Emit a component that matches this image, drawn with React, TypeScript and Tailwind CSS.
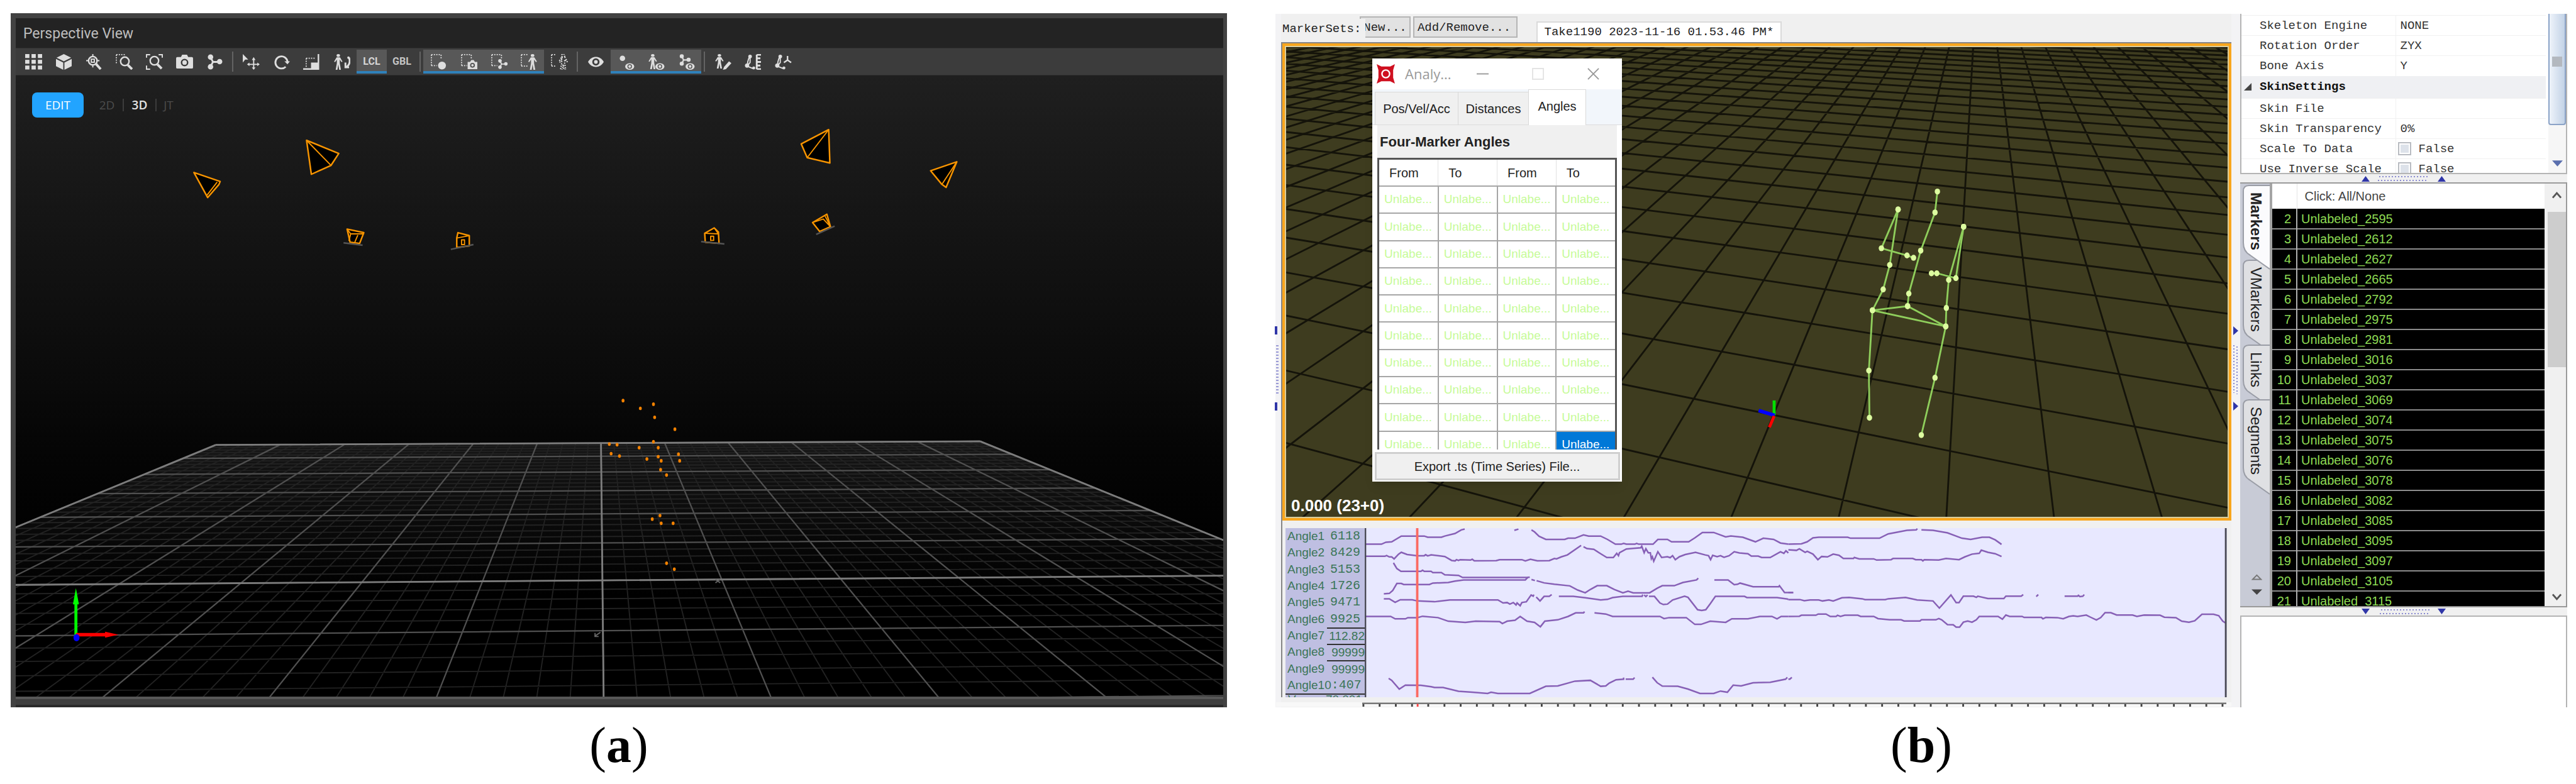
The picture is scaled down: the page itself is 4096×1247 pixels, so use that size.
import type { ReactNode } from "react";

type Point = [number, number];

const line = (points: Point[]) => "M" + points.map(([x, y]) => `${x.toFixed(1)},${y.toFixed(1)}`).join(" ");

const range = (from: number, to: number) => Array.from({ length: to - from + 1 }, (_, i) => from + i);

/* ---------- left view: floor, cameras, markers ---------- */

// floor coordinates: u runs left to right (-6..6), v from the back edge to the viewer
function floor(u: number, v: number): Point {
  const w = 1 + 0.001352 * u - 0.07793 * v;
  return [(108.22 * u - 78.34 * v + 1008) / w, (0.5 * u - 37.47 * v + 743.3) / w];
}

const floorMinor = [
  ...range(-30, 30).filter((i) => i % 5).map((i) => line([floor(i / 5, 0), floor(i / 5, 9)])),
  ...range(0, 45).filter((i) => i % 5).map((i) => line([floor(-6, i / 5), floor(6, i / 5)])),
].join("");

const floorMajor = [
  ...range(-6, 6).map((i) => line([floor(i, 0), floor(i, 9)])),
  ...range(0, 8).map((i) => line([floor(-6, i), floor(6, i)])),
].join("");

const floorBright = [
  line([floor(-6, 0), floor(6, 0)]),
  line([floor(-6, 6), floor(6, 6)]),
  line([floor(0, 0), floor(0, 9)]),
  line([floor(-6, 0), floor(-6, 9)]),
  line([floor(6, 0), floor(6, 9)]),
].join("");

const cameras = [
  { body: "M325,289 369,304 367,309 348,331Z", edge: "M364,305 347,327" },
  { body: "M514,235 568,257 555,277 522,292Z", edge: "M514,235 555,277" },
  { body: "M582,384 610,390 603,408 587,406Z", edge: "M582,384 588,392 610,392M588,392 585,404M600,394 595,406", base: "M576,407 608,411" },
  { body: "M768,390 787,395 787,412 766,415 766,399Z", edge: "M766,399 787,395M774,402h5v8h-5z", base: "M756,418 794,410" },
  { body: "M1198,382 1182,391 1183,406 1206,408 1205,389Z", edge: "M1182,391 1205,392M1198,382 1205,392M1192,396h5v7h-5z", base: "M1176,405 1215,409" },
  { body: "M1387,359 1363,373 1375,388 1393,380Z", edge: "M1363,373 1381,367 1393,380M1384,362 1392,378", base: "M1369,393 1400,379" },
  { body: "M1390,217 1344,241 1354,264 1392,273Z", edge: "M1390,217 1354,264" },
  { body: "M1605,271 1561,286 1580,309 1587,314Z", edge: "M1605,271 1580,309" },
];

const dots: Point[] = [
  [1045, 672], [1074, 685], [1096, 678], [1098, 700], [1132, 720], [1096, 741], [1022, 745],
  [1035, 746], [1072, 751], [1104, 751], [1025, 761], [1039, 765], [1085, 770], [1104, 766],
  [1109, 773], [1138, 762], [1140, 773], [1108, 788], [1118, 797], [1107, 865], [1094, 871],
  [1109, 878], [1129, 878], [1118, 945], [1131, 955],
];

function PerspectiveScene() {
  return (
    <svg viewBox="26 126 2026 1043" preserveAspectRatio="none" className="absolute inset-0 h-full w-full" aria-hidden="true">
      <defs>
        <linearGradient id="haze" x1="0" y1="0" x2="0" y2="1">
          <stop offset="0" stopColor="#161616" />
          <stop offset="0.4" stopColor="#000" />
        </linearGradient>
      </defs>
      <path d={line([floor(-6, 0), floor(6, 0), floor(6, 9), floor(-6, 9)]) + "Z"} fill="url(#haze)" />
      <path d={floorMinor} fill="none" stroke="#222" strokeWidth="2" />
      <path d={floorMajor} fill="none" stroke="#505050" strokeWidth="2.4" />
      <path d={floorBright} fill="none" stroke="#7c7c7c" strokeWidth="3" />
      {cameras.map((camera) => (
        <g key={camera.body} fill="none" stroke="#f79400" strokeWidth="2.6" strokeLinejoin="round">
          <path d={camera.body} fill="#000" />
          <path d={camera.edge} strokeWidth="2" />
          {camera.base && <path d={camera.base} stroke="#555" />}
        </g>
      ))}
      {dots.map(([x, y]) => (
        <ellipse key={`${x}-${y}`} cx={x} cy={y} rx="2.4" ry="3" fill="#f58200" />
      ))}
      <g stroke="#666" strokeWidth="2" fill="none">
        <path d="M1007,1061 997,1068M998,1062v6h6" />
        <path d="M1200,972 1208,978M1208,972 1200,978" />
      </g>
      <path d="M127,1066V1010" stroke="#0f0" strokeWidth="5" />
      <path d="M127,987 122,1014H132Z" fill="#0f0" />
      <path d="M127,1065H178" stroke="#f00" strokeWidth="6" />
      <path d="M198,1065 176,1060V1070Z" fill="#f00" />
      <ellipse cx="128" cy="1070" rx="5" ry="6" fill="#00f" />
    </svg>
  );
}

/* ---------- toolbar icons ---------- */

const person = "M6 0a2.4 2.4 0 1 1 0 4.8A2.4 2.4 0 1 1 6 0M3.6 5.4h4.8l3.4 7-1.4.8-2.4-4.2v6L9.6 26H7.2L6 17 4.8 26H2.4L4 15V9L1.6 13.2.2 12.4Z";
const selection = "M2 1h16M2 19h9M2 1v18M18 1v6";

function Icon({ children }: { children: ReactNode }) {
  return (
    <svg viewBox="0 0 28 26" className="h-[25px] w-[27px]" fill="#dedede" stroke="none" aria-hidden="true">
      {children}
    </svg>
  );
}

const dashed = { fill: "none", stroke: "#dedede", strokeWidth: 1.8, strokeDasharray: "2 2" };
const stroked = { fill: "none", stroke: "#dedede", strokeWidth: 2 };

function SmallEye() {
  return (
    <g>
      <ellipse cx="20" cy="20.5" rx="7.5" ry="5.5" />
      <circle cx="20" cy="20.5" r="3" fill="none" stroke="#555" strokeWidth="1.5" />
    </g>
  );
}

function Molecule() {
  return (
    <g>
      <circle cx="7" cy="5" r="4.5" />
      <circle cx="7" cy="21" r="4.5" />
      <circle cx="22" cy="12.5" r="4.5" />
      <path d="M7 5 11 13 7 21M11 13H22" fill="none" stroke="#dedede" strokeWidth="3" />
    </g>
  );
}

const icons: Record<string, ReactNode> = {
  Grid: range(0, 8).map((i) => <rect key={i} x={(i % 3) * 10.5} y={Math.floor(i / 3) * 9.5} width="7" height="6.5" />),
  "Reset view": <path d="M14 0 26 6 14 12 2 6ZM1 8 13 14V26L1 20ZM27 8 15 14V26L27 20Z" />,
  "Zoom to selection": (
    <>
      <circle cx="12" cy="11" r="7" {...stroked} strokeWidth="2.5" />
      <path d="M12 0v5M12 17v5M1 11h5M18 11h5" {...stroked} />
      <rect x="9.5" y="8.5" width="5" height="5" {...stroked} />
      <path d="M17 16 25 25" {...stroked} strokeWidth="4" />
    </>
  ),
  "Zoom region": (
    <>
      <path d="M1 1h14M1 1v14" {...dashed} />
      <circle cx="15" cy="12" r="7" {...stroked} strokeWidth="2.5" />
      <path d="M20 18 27 25" {...stroked} strokeWidth="4" />
    </>
  ),
  "Zoom extents": (
    <>
      <path d="M1 6V1h6M21 1h6v5M1 19v6h6" {...stroked} />
      <circle cx="14" cy="11" r="7" {...stroked} strokeWidth="2.5" />
      <path d="M19 17 26 24" {...stroked} strokeWidth="4" />
    </>
  ),
  Camera: (
    <>
      <path d="M2 5h6l2-4h8l2 4h6a2 2 0 0 1 2 2v15a2 2 0 0 1-2 2H2a2 2 0 0 1-2-2V7a2 2 0 0 1 2-2Z" />
      <circle cx="14" cy="14" r="5" fill="none" stroke="#3c3c3c" strokeWidth="2.5" />
    </>
  ),
  Skeleton: <Molecule />,
  Translate: (
    <>
      <path d="M0 0 9 9 4 9 0 14Z" />
      <path d="M18 9v16M10 17h16" {...stroked} />
      <path d="M18 5 21 10H15ZM18 26 15 22H21ZM7 17 11 14V20ZM28 17 24 14V20Z" />
    </>
  ),
  Rotate: (
    <>
      <path d="M21 21A10 10 0 1 1 24 13" {...stroked} strokeWidth="3" />
      <path d="M19 12H28L24 17Z" />
    </>
  ),
  Scale: (
    <>
      <path d="M5 7h14M5 7v15" {...dashed} />
      <path d="M24 0h2.5v26H0v-2.5h13V14h11Z" />
    </>
  ),
  "Pose actor": (
    <>
      <path d={person} transform="translate(1 0) scale(1.2 1)" />
      <path d="M26 6c2 6 1 12-5 16M20 14v8h6" {...stroked} strokeWidth="3" />
      <circle cx="25" cy="6" r="2" />
    </>
  ),
  "Select markers": (
    <>
      <path d={selection} {...dashed} />
      <circle cx="19.5" cy="19" r="6.5" />
    </>
  ),
  "Select cameras": (
    <>
      <path d={selection} {...dashed} />
      <path d="M12 13h4l2-3h4l2 3h4v12H12Z" />
      <circle cx="20" cy="18.5" r="3" fill="none" stroke="#555" strokeWidth="2" />
    </>
  ),
  "Select rigid bodies": (
    <>
      <path d={selection} {...dashed} />
      <g transform="translate(11 8) scale(.65)">
        <Molecule />
      </g>
    </>
  ),
  "Select skeletons": (
    <>
      <path d="M1 1h12M1 20h10M1 1v18" {...dashed} />
      <path d={person} transform="translate(12 0) scale(1.25 1)" />
    </>
  ),
  "Select bones": (
    <>
      <path d="M1 1h8M1 20h8M1 1v18" {...dashed} />
      <path d={person} transform="translate(13 0) scale(1.2 1)" {...dashed} />
    </>
  ),
  Visibility: (
    <>
      <path d="M1 13C7 2 21 2 27 13 21 24 7 24 1 13Z" />
      <circle cx="14" cy="13" r="4.5" fill="none" stroke="#3c3c3c" strokeWidth="3" />
    </>
  ),
  "Show markers": (
    <>
      <circle cx="8" cy="7" r="4.5" />
      <SmallEye />
    </>
  ),
  "Show skeletons": (
    <>
      <path d={person} transform="translate(1 0) scale(1.2 .96)" />
      <SmallEye />
    </>
  ),
  "Show rigid bodies": (
    <>
      <g transform="translate(1 0) scale(.75)">
        <Molecule />
      </g>
      <SmallEye />
    </>
  ),
  "Edit skeleton": (
    <>
      <path d={person} transform="translate(1 0) scale(1.2 .92)" />
      <path d="M24 12 28 15 19 25 14 26 16 21Z" />
    </>
  ),
  "Label eyes": (
    <>
      <path d="M9 3C5 9 5 14 4 20L14 24M9 3 9 14 4 20" {...stroked} />
      <circle cx="9" cy="4" r="3" />
      <circle cx="4" cy="19" r="3.5" />
      <circle cx="15" cy="23" r="2.5" />
      <path d="M20 1h7M20 7h6M20 13h7M20 19h6M20 25h7M20 1v24" {...stroked} strokeWidth="3" />
    </>
  ),
  "Label axes": (
    <>
      <path d="M9 3C5 9 5 14 4 20L14 24M9 3 9 14 4 20" {...stroked} />
      <circle cx="9" cy="4" r="3" />
      <circle cx="4" cy="19" r="3.5" />
      <circle cx="15" cy="23" r="2.5" />
      <path d="M21 3v7M21 10 15 14M21 10 27 14" {...stroked} strokeWidth="2.5" />
    </>
  ),
};

const toolGroups: { name: string; active?: boolean }[][] = [
  [{ name: "Grid" }, { name: "Reset view" }, { name: "Zoom to selection" }, { name: "Zoom region" }, { name: "Zoom extents" }, { name: "Camera" }, { name: "Skeleton" }],
  [{ name: "Translate" }, { name: "Rotate" }, { name: "Scale" }, { name: "Pose actor" }, { name: "LCL", active: true }, { name: "GBL" }],
  [
    { name: "Select markers", active: true },
    { name: "Select cameras", active: true },
    { name: "Select rigid bodies", active: true },
    { name: "Select skeletons", active: true },
    { name: "Select bones" },
  ],
  [{ name: "Visibility" }, { name: "Show markers", active: true }, { name: "Show skeletons", active: true }, { name: "Show rigid bodies", active: true }],
  [{ name: "Edit skeleton" }, { name: "Label eyes" }, { name: "Label axes" }],
];

function Toolbar() {
  return (
    <div className="flex h-11 items-center border-y border-[#303030] bg-[#3c3c3c] pl-1 font-['Roboto',sans-serif]">
      {toolGroups.map((group, i) => (
        <div key={i} className="flex items-center">
          {i > 0 && <span className="mx-1 h-8 w-0.5 bg-[#636363]" />}
          {group.map((tool) => (
            <button
              key={tool.name}
              type="button"
              aria-label={tool.name}
              className={
                tool.active
                  ? "flex h-[38px] w-12 items-center justify-center border-b-4 border-[#2f81bb] bg-[#585858] pt-1 text-[16px] font-bold text-[#d6d6d6]"
                  : "flex h-[38px] w-12 items-center justify-center text-[16px] font-bold text-[#c4c4c4]"
              }
            >
              {icons[tool.name] ? <Icon>{icons[tool.name]}</Icon> : tool.name}
            </button>
          ))}
        </div>
      ))}
    </div>
  );
}

function PerspectiveView() {
  return (
    <section className="border-t-8 border-r-6 border-l-8 border-[#424242] bg-[#232323]">
      <h2 className="flex h-[47px] items-center pt-1 pl-3 font-['Roboto',sans-serif] text-[23px] text-[#bdbdbd]">Perspective View</h2>
      <Toolbar />
      <div className="relative h-[988px] bg-linear-to-b from-[#1f1f1f] via-[#0a0a0a] via-50% to-black">
        <PerspectiveScene />
        <div className="relative flex items-center pt-[27px] pl-[26px] font-['Open_Sans',sans-serif] text-[19px] text-[#4c4c4c]">
          <button type="button" className="h-10 w-[82px] rounded-lg bg-[#22a4ff] text-white">EDIT</button>
          <div className="flex h-7 items-center divide-x-2 divide-[#3c3c3c] pl-3 leading-5">
            <button type="button" className="w-[52px]">2D</button>
            <button type="button" className="w-[52px] font-semibold text-[#e4e4e4]">3D</button>
            <button type="button" className="w-[38px]">JT</button>
          </div>
        </div>
      </div>
      <div className="h-[17px] border-t-4 border-b-4 border-t-[#585858] border-b-[#2a2a2a] bg-[#3e3e3e]" />
    </section>
  );
}

/* ---------- right view: olive floor and skeleton ---------- */

function ground(u: number, v: number): Point {
  const s = u / 5;
  const t = (v - 2) / 6;
  const w = 1 - 0.139 * s + 0.54489 * t;
  return [(151.82 * s + 1810.7 * t + 3038.1) / w, (18.33 * s - 79.83 * t + 543.3) / w];
}

const groundLines = [
  ...range(-29, 13).map((u) => line([ground(u, -3), ground(u, 30)])),
  ...range(-3, 30).map((v) => line([ground(-29, v), ground(13, v)])),
].join("");

const bones: Point[][] = [
  [[3250, 322], [3246, 357], [3222, 421], [3202, 493], [3200, 514], [3141, 521], [3264, 548], [3200, 514]],
  [[3184, 352], [3156, 417], [3199, 429], [3210, 433]],
  [[3184, 352], [3170, 445], [3159, 486], [3141, 521], [3135, 622], [3136, 701]],
  [[3294, 381], [3281, 467], [3249, 459], [3240, 459]],
  [[3294, 381], [3269, 470], [3265, 517], [3264, 548], [3246, 634], [3223, 730]],
];

function SkeletonScene() {
  return (
    <svg viewBox="2157 80 1580 787" preserveAspectRatio="none" className="absolute inset-0 h-full w-full" aria-hidden="true">
      <path d={groundLines} fill="none" stroke="#14130a" strokeWidth="3" />
      <path d="M2976,697V672" stroke="#00e000" strokeWidth="5" />
      <path d="M2977,697 2950,689" stroke="#00f" strokeWidth="6" />
      <path d="M2976,698 2968,717" stroke="#f00" strokeWidth="5" />
      {bones.map((bone, i) => (
        <path key={i} d={line(bone)} fill="none" stroke="#8fce5c" strokeWidth="3" />
      ))}
      {bones.flat().map(([x, y], i) => (
        <ellipse key={i} cx={x} cy={y} rx="4.5" ry="5" fill="#ddfca0" />
      ))}
    </svg>
  );
}

const angleRows = range(0, 9);

function AnglesDialog() {
  return (
    <div className="absolute top-[18px] left-[137px] w-[397px] bg-white pb-0.5 font-['Liberation_Sans',sans-serif] text-[20px] text-[#222] shadow-lg">
      <div className="flex h-[49px] items-center pl-[7px] text-[#9a9a9a]">
        <svg viewBox="0 0 31 33" className="h-[31px] w-[29px] shrink-0" aria-hidden="true">
          <path d="M0 0 8 4H23L31 0 28 10V23L31 33 23 29H8L0 33 3 23V10Z" fill="#cf1020" />
          <circle cx="15.5" cy="16.5" r="6.5" fill="#cf1020" stroke="#fff" strokeWidth="2.5" />
        </svg>
        <span className="w-[126px] pl-4 font-['Open_Sans',sans-serif] text-[22px]">Analy...</span>
        <button type="button" aria-label="Minimize" className="w-[88px] pl-1">
          <svg viewBox="0 0 20 20" className="h-[19px] w-[19px] stroke-current"><path d="M0 10H20" strokeWidth="2" /></svg>
        </button>
        <button type="button" aria-label="Maximize" className="w-[88px] pl-1 text-[#e4e4e4]">
          <svg viewBox="0 0 20 20" className="h-[19px] w-[19px] fill-none stroke-current"><path d="M1 1H19V19H1Z" strokeWidth="2" /></svg>
        </button>
        <button type="button" aria-label="Close" className="pl-1">
          <svg viewBox="0 0 20 20" className="h-[19px] w-[19px] stroke-current"><path d="M1 1 19 19M19 1 1 19" strokeWidth="2" /></svg>
        </button>
      </div>
      <div role="tablist" className="flex h-[57px] items-end border-b border-[#dcdcdc] bg-[#f2f6fb] pl-1">
        <button role="tab" type="button" className="h-[52px] w-[133px] border border-b-0 border-[#d9d9d9] bg-[#f0f0f0]">Pos/Vel/Acc</button>
        <button role="tab" type="button" className="h-[52px] w-[111px] border-t border-[#d9d9d9] bg-[#f0f0f0]">Distances</button>
        <button role="tab" type="button" aria-selected="true" className="-mb-px h-[57px] w-[92px] border border-b-0 border-[#d9d9d9] bg-white pb-1">Angles</button>
      </div>
      <div className="px-2">
        <h3 className="flex h-[52px] items-center bg-[#f0f0f0] pl-1 text-[22px] font-bold">Four-Marker Angles</h3>
        <div className="h-[464px] overflow-hidden border-x-3 border-t-3 border-[#555] bg-white">
          <table className="h-[476px] w-full table-fixed border-collapse text-left">
            <thead>
              <tr className="h-[42px]">
                {["From", "To", "From", "To"].map((name, i) => (
                  <th key={i} className="h-[42px] border-r border-b-2 border-r-[#e2e2e2] border-b-[#a6a6a6] pl-4 font-normal last:border-r-0">{name}</th>
                ))}
              </tr>
            </thead>
            <tbody className="text-[19px] text-[#c6fb98]">
              {angleRows.map((row) => (
                <tr key={row}>
                  {[0, 1, 2, 3].map((col) => (
                    <td
                      key={col}
                      className={
                        row === 9 && col === 3
                          ? "border-b-2 border-[#a6a6a6] bg-[#0078d7] pl-2 text-white"
                          : "border-r-2 border-b-2 border-[#a6a6a6] pl-2 last:border-r-0"
                      }
                    >
                      Unlabe...
                    </td>
                  ))}
                </tr>
              ))}
            </tbody>
          </table>
        </div>
      </div>
      <button type="button" className="mx-auto mt-1 block h-[45px] w-[390px] border-3 border-[#cfcfcf] bg-[#f0f0f0]">Export .ts (Time Series) File...</button>
    </div>
  );
}

/* ---------- angle traces ---------- */

const tracesStart = [
  "M295,162 345,162 358,152 375,150 403,121 470,121 480,127 520,127 530,121 560,108 578,90 588,86M733,92 745,86M783,90 792,100 805,122 825,138 880,138 890,132 910,132 935,115 950,121 985,121 1005,138 1028,162 1045,162 1052,158 1060,162 1085,162 1090,158 1096,162 1138,162 1152,138 1180,138 1192,150 1242,150 1260,130 1282,103 1315,103 1350,125 1365,121 1400,127 1437,150 1460,132 1490,138 1510,156 1533,162",
  "M295,223 355,223 360,219 368,226 375,226 382,236 395,212 403,203 420,214 450,220 470,220 474,215 480,221 490,216 520,222 530,224 550,244 560,246 564,240 570,244 575,240 605,242 610,238 616,246 680,245 690,240 755,240 765,246 780,238 800,246 835,245 850,234 856,236 870,226 888,216 928,168M935,175 945,184 965,188 985,210 1003,229 1022,229 1032,208 1037,220 1040,205 1060,186 1080,183 1102,180 1105,172 1112,205 1117,185 1124,205 1130,205 1133,235 1136,225 1140,248 1152,200 1163,229 1180,225 1188,230 1195,220 1203,240 1215,225 1232,214 1262,203 1290,216 1300,220 1306,240 1312,218 1325,225 1335,220 1345,228 1360,220 1375,200 1390,206 1415,210 1425,222 1445,222 1455,229 1480,229 1510,200 1520,208 1526,195 1533,206",
  "M380,256 390,285 402,299 460,299 465,293 470,299 490,299 495,305 520,305 530,316 570,319 582,330 770,330 778,328",
  "M352,412 368,410 378,395 390,360 403,360 410,365 485,365 495,358 540,355 560,348 585,342 765,342 772,330M783,340 793,345M798,346 820,357 850,364 895,372 918,393 940,407 955,390 975,371 1003,371 1025,390 1050,407 1065,399 1080,407 1128,407 1150,384 1165,371 1200,371 1225,355 1265,342 1270,333M1317,342 1357,342 1375,366 1385,364 1392,358 1430,376 1505,376 1507,371 1522,406 1547,406",
  "M352,437 368,437 385,455 400,442 435,442 450,448 500,452 545,443 685,443 700,458 712,456 720,464 730,456 738,468 741,458 750,472 755,456 768,452 782,418 788,424 790,416M797,428 808,448 820,425 835,425 842,416M863,425 905,425 940,432 985,443 1005,440 1020,431 1050,425 1106,425 1108,416M1112,418 1117,426 1122,418M1126,425 1142,425 1158,458 1168,466 1180,464 1195,443 1230,424 1240,430 1268,492 1280,496 1292,492 1305,462 1320,425 1405,425 1412,431 1500,431 1530,438 1533,441",
  "M295,526 372,526 385,538 415,538 422,532 450,532 465,525 510,532 540,550 590,556 620,550 690,552 698,562 712,550 735,545 750,526 770,550 792,556 809,578 822,550 860,543 890,526 912,508 935,508 938,502M967,508 1000,514 1020,526 1158,526 1170,537 1185,532 1235,532 1260,566 1278,566 1305,550 1350,556 1368,538 1415,538 1450,526 1485,526 1500,538 1512,526 1533,526",
  "M366,838 375,848 397,892 415,872 460,873 490,880 500,884 525,884 570,903 610,908 655,914 665,908 685,914 778,914 825,878 860,876 910,852 955,848 985,878 1000,876 1010,862 1030,845 1052,842 1052,834M1058,842 1080,842 1084,834M1136,832 1150,860 1165,877 1210,878 1240,892 1275,914 1315,914 1335,902 1355,908 1372,872 1395,876 1430,860 1480,858 1525,842 1530,833",
];

const tracesEnd = [
  "M0,162 45,160 65,150 85,130 105,127 205,127 215,132 315,132 345,110 410,92 442,90 446,84M460,90 500,92 550,105 600,132 630,138 670,127 695,127 715,140 737,163",
  "M0,190 28,193 38,185 58,203 65,198 85,212 102,240 115,224 135,226 155,212 175,218 190,234 225,234 228,229 245,236 295,236 305,242 355,240 362,234 430,234 440,240 460,240 465,246 470,240 520,242 545,234 590,240 610,226 635,212 660,208 667,192 690,203 715,210 737,224",
  "M0,406 17,406",
  "M0,441 40,441 55,447 75,443 105,443 118,448 140,443 155,448 185,432 210,430 255,437 265,441 335,441 345,437 405,430 445,443 500,448 522,484 562,418 580,456 590,456 605,424 640,424 650,430 655,424 690,436 745,436 752,424 805,424 812,416M857,426 864,416M955,424 1000,424 1003,420 1008,426 1018,424 1023,416",
  "M0,526 38,525 45,520 95,520 103,514 130,514 145,526 165,526 170,520 180,526 195,520 240,520 250,526 295,526 310,537 350,543 390,543 400,549 455,549 460,543 510,543 520,537 530,543 550,567 570,568 580,580 592,580 605,555 620,549 635,555 650,543 660,526 725,526 740,540 752,519 765,526 808,526 815,531 875,531 880,538 890,531 930,532 950,538 970,526 985,523 1000,526 1030,519 1045,530 1065,544 1080,532 1095,507 1115,507 1135,519 1190,519 1205,526 1230,519 1285,520 1300,530 1340,532 1360,550 1385,555 1405,548 1430,515 1470,515 1488,522 1502,550 1513,560",
  "M0,842 5,842 12,833",
];

function AngleChart() {
  return (
    <svg viewBox="2290 887 1445 284" preserveAspectRatio="none" className="h-full min-w-0 flex-1 bg-[#e8e8ff]" aria-hidden="true">
      <g fill="none" stroke="#8760b6">
        <g transform="translate(2120 860) scale(.574 .3333)">
          {tracesStart.map((d, i) => <path key={i} d={d} strokeWidth="2.5" vectorEffect="non-scaling-stroke" />)}
        </g>
        <g transform="translate(3000 860) scale(.4847 .3333)">
          {tracesEnd.map((d, i) => <path key={i} d={d} strokeWidth="2.5" vectorEffect="non-scaling-stroke" />)}
        </g>
      </g>
      <path d="M2378,887V1171" stroke="#fb6a62" strokeWidth="4" />
      <path d="M2291,887V1171M3733,887V1171" stroke="#4a4a55" strokeWidth="3" />
    </svg>
  );
}

const angleLabels = [
  { name: "Angle1", value: "6118" },
  { name: "Angle2", value: "8429" },
  { name: "Angle3", value: "5153" },
  { name: "Angle4", value: "1726" },
  { name: "Angle5", value: "9471" },
  { name: "Angle6", value: "9925" },
  { name: "Angle7", value: "112.82", plain: true },
  { name: "Angle8", value: "99999", plain: true },
  { name: "Angle9", value: "99999", plain: true },
  { name: "Angle10", value: ":407" },
];

function AnglePanel() {
  return (
    <div className="mr-[7px] ml-[5px] flex h-[269px] overflow-hidden">
      <div className="flex w-[126px] shrink-0 flex-col bg-[#bfbfe2] font-['Liberation_Sans',sans-serif] text-[19px] text-[#3c7658]">
        {angleLabels.map((row) => (
          <div key={row.name} className="flex min-h-0 flex-1 items-center justify-between pl-[3px] leading-6 whitespace-nowrap">
            <span>{row.name}</span>
            {row.plain ? (
              <span className="flex h-full w-[60px] items-center justify-end border-t-2 border-[#333]">{row.value}</span>
            ) : (
              <span className="pr-[7px] font-['Liberation_Mono',monospace] text-[20px]">{row.value}</span>
            )}
          </div>
        ))}
        <div className="flex h-[6px] items-start justify-between overflow-hidden border-t-2 border-[#333] px-1 leading-4">
          <span>V</span>
          <span>70.001</span>
        </div>
      </div>
      <AngleChart />
    </div>
  );
}

function Ruler() {
  return (
    <svg viewBox="2285 1179 1450 8" preserveAspectRatio="none" className="mt-2 ml-[137px] h-[7px] w-[1374px] max-w-full" aria-hidden="true">
      <path d="M2285,1181H3735" stroke="#777" strokeWidth="3" />
      <path d={range(0, 53).map((i) => `M${2287 + i * 27.2},1182v6`).join("")} stroke="#444" strokeWidth="3" />
      <path d="M2378,1182v6" stroke="#f44" strokeWidth="3" />
    </svg>
  );
}

/* ---------- splitters ---------- */

function VerticalSplitter() {
  return (
    <div className="flex flex-col items-center overflow-hidden bg-[#f3f3f5] pt-[497px]">
      <svg viewBox="0 0 12 136" className="h-[136px] w-3 shrink-0" aria-hidden="true">
        <path d="M2 0 10 7 2 14ZM2 120 10 127 2 134Z" fill="#3036a8" />
        <path d="M3 30V106M8 32V108" stroke="#8a8ad0" strokeWidth="2" strokeDasharray="2 3" />
      </svg>
    </div>
  );
}

function HorizontalSplitter({ down }: { down?: boolean }) {
  return (
    <div className="flex h-[13px] items-center justify-center bg-[#f0f0f0]">
      <svg viewBox="0 0 134 12" className={down ? "h-3 w-[134px] rotate-180" : "h-3 w-[134px]"} aria-hidden="true">
        <path d="M0 11 6.5 2 13 11ZM121 11 127.5 2 134 11Z" fill="#3036a8" />
        <path d="M28 3H106M26 9H104" stroke="#8a8ad0" strokeWidth="2" strokeDasharray="2 3" />
      </svg>
    </div>
  );
}

/* ---------- right column ---------- */

const settings: { name: string; value?: string; group?: boolean; check?: boolean }[] = [
  { name: "Skeleton Engine", value: "NONE" },
  { name: "Rotation Order", value: "ZYX" },
  { name: "Bone Axis", value: "Y" },
  { name: "SkinSettings", group: true },
  { name: "Skin File", value: "" },
  { name: "Skin Transparency", value: "0%" },
  { name: "Scale To Data", value: "False", check: true },
  { name: "Use Inverse Scale", value: "False", check: true },
];

function PropertyGrid() {
  return (
    <div className="flex h-[255px] overflow-hidden border-x-2 border-b-2 border-[#b4b4b4] bg-white pt-[2px] font-['Liberation_Mono',monospace] text-[19px] leading-6 text-[#333]">
      <table className="h-[260px] min-w-0 flex-1 table-fixed border-collapse">
        <tbody>
          {settings.map((row) =>
            row.group ? (
              <tr key={row.name} className="h-9 bg-[#eff0f3]">
                <th colSpan={2} className="text-left font-bold text-[#111]">
                  <span className="flex items-center pl-1">
                    <svg viewBox="0 0 14 14" className="mr-3 h-[13px] w-[13px]" aria-hidden="true"><path d="M13 0V13H0Z" fill="#444" /></svg>
                    {row.name}
                  </span>
                </th>
              </tr>
            ) : (
              <tr key={row.name} className="h-8 border-t border-[#f1f1f1]">
                <td className="w-[245px] border-r border-[#f1f1f1] pl-[29px] whitespace-nowrap">{row.name}</td>
                <td className="pl-[7px]">
                  {row.check ? (
                    <label className="-ml-1 flex items-center gap-3">
                      <input type="checkbox" className="h-[21px] w-[21px] appearance-none border-2 border-[#b9bcc2] bg-[#dde2ea] ring-2 ring-white ring-inset" />
                      {row.value}
                    </label>
                  ) : (
                    row.value
                  )}
                </td>
              </tr>
            ),
          )}
        </tbody>
      </table>
      <div className="-mt-[2px] ml-1 flex w-[28px] shrink-0 flex-col items-center bg-[#f6f6f6]">
        <div className="flex h-[177px] w-full shrink-0 items-center justify-center rounded-b border-x-2 border-b-2 border-[#8ba3c7] bg-linear-to-r from-[#eef3fa] to-[#c2d2e6] pt-5 pb-11">
          <span className="h-4 w-4 bg-[#b3b8bf]" />
        </div>
        <svg viewBox="0 0 18 10" className="mt-[56px] h-[10px] w-[17px] shrink-0" aria-hidden="true"><path d="M0 0H18L9 10Z" fill="#5a6fae" /></svg>
      </div>
    </div>
  );
}

const markers = [
  2595, 2612, 2627, 2665, 2792, 2975, 2981, 3016, 3037, 3069, 3074, 3075, 3076, 3078, 3082, 3085, 3095, 3097, 3105, 3115,
].map((id, i) => ({ index: i + 2, name: `Unlabeled_${id}` }));

const sideTabs = [
  { name: "Markers", height: "h-[119px] font-bold z-10", shape: 136, fill: "#fbfbfd" },
  { name: "VMarkers", height: "h-[135px]", shape: 148, fill: "#dfe0e3" },
  { name: "Links", height: "h-[87px]", shape: 101, fill: "#dfe0e3" },
  { name: "Segments", height: "h-[120px]", shape: 153, fill: "#dfe0e3" },
];

function SideTabs() {
  return (
    <div role="tablist" aria-orientation="vertical" className="flex w-[47px] shrink-0 flex-col items-end bg-[#c8cbd6] pt-0.5 font-['Liberation_Sans',sans-serif] text-[24px] text-[#222]">
      {sideTabs.map((tab) => (
        <button key={tab.name} role="tab" type="button" className={`relative w-[43px] shrink-0 ${tab.height}`}>
          <svg viewBox={`0 0 43 ${tab.shape}`} height={tab.shape} className="absolute top-0 left-0 w-[43px]" aria-hidden="true">
            <path
              d={`M43 1H10Q1 1 1 10V${tab.shape - 44}Q1 ${tab.shape - 30} 12 ${tab.shape - 24}L43 ${tab.shape - 2}`}
              fill={tab.fill}
              stroke="#9a9da6"
              strokeWidth="2"
            />
          </svg>
          <span className="absolute top-3 left-[9px] leading-6 [writing-mode:vertical-rl]">{tab.name}</span>
        </button>
      ))}
      <svg viewBox="0 0 18 36" className="mt-auto mr-3 mb-4 h-[36px] w-[17px]" aria-hidden="true">
        <path d="M2 9 9 2 16 9Z" fill="none" stroke="#777" strokeWidth="2" />
        <path d="M0 26H18L9 35Z" fill="#444" />
      </svg>
    </div>
  );
}

function MarkerList() {
  return (
    <div className="flex h-[676px] overflow-hidden border-t-2 border-r-2 border-b-2 border-[#9a9a9a] bg-[#f0f0f0]">
      <SideTabs />
      <div className="min-w-0 flex-1 overflow-hidden border-l-4 border-[#a4a4a4] font-['Liberation_Sans',sans-serif] text-[20px] leading-6">
        <table className="w-full border-collapse bg-black text-[#8edc54]">
          <thead>
            <tr className="h-[40px] bg-white text-[#444]">
              <th className="w-[39px] border-r border-[#e4e4e4]" aria-label="Index" />
              <th className="pl-3 text-left font-normal">Click: All/None</th>
            </tr>
          </thead>
          <tbody>
            {markers.map((marker) => (
              <tr key={marker.index} className="h-8 border-b-2 border-[#8c8c8c]">
                <td className="border-r-2 border-[#b0b0b0] pr-2 text-right">{marker.index}</td>
                <td className="pl-1.5">{marker.name}</td>
              </tr>
            ))}
          </tbody>
        </table>
      </div>
      <div className="ml-1 flex w-[30px] shrink-0 flex-col items-center">
        <svg viewBox="0 0 16 12" className="mt-3 h-[12px] w-[15px] fill-none stroke-[#555]" aria-hidden="true"><path d="M1 11 8 3 15 11" strokeWidth="3" /></svg>
        <div className="mt-[21px] h-[247px] w-[29px] shrink-0 bg-[#cdcdcd]" />
        <svg viewBox="0 0 16 12" className="mt-auto mb-2 h-[12px] w-[15px] fill-none stroke-[#555]" aria-hidden="true"><path d="M1 1 8 9 15 1" strokeWidth="3" /></svg>
      </div>
    </div>
  );
}

function AnalysisView() {
  return (
    <section className="mt-px grid grid-cols-[9px_minmax(0,1fr)_14px_520px] bg-[#f0f0f0]">
      <div className="flex flex-col items-center bg-[#f3f3f5] pt-[497px]">
        <svg viewBox="0 0 8 136" className="mr-1 h-[136px] w-2" aria-hidden="true">
          <path d="M0 0H4V13H0ZM0 121H4V134H0Z" fill="#3036a8" />
          <path d="M4 30V108" stroke="#9a9ad6" strokeWidth="4" strokeDasharray="2 3" />
        </svg>
      </div>
      <div className="min-w-0">
        <div className="flex h-[45px] items-start font-['Liberation_Mono',monospace] text-[19px] text-[#222]">
          <span className="relative z-10 mt-2 flex h-8 w-[134px] items-center bg-[#f0f0f0] pl-0.5">MarkerSets:</span>
          <button type="button" className="mt-1 -ml-[9px] h-[34px] w-[81px] border-2 border-[#b5b5b5] bg-[#e2e2e2] pt-0.5">New...</button>
          <button type="button" className="mt-1 ml-1 h-[34px] w-[166px] border-2 border-[#b5b5b5] bg-[#e2e2e2] pt-0.5 pr-1">Add/Remove...</button>
          <div className="mt-3 ml-[30px] flex h-[33px] w-[390px] items-center justify-center border-2 border-b-0 border-[#dadada] bg-white whitespace-pre">
            Take1190 2023-11-16 01.53.46 PM*
          </div>
        </div>
        <div className="border-t-2 border-l-2 border-[#858585]">
          <div className="border-4 border-[#f9a61c]">
            <div className="relative h-[751px] overflow-hidden border-2 border-[#d8cc9c] bg-[#3e3c1f]">
              <SkeletonScene />
              <AnglesDialog />
              <p className="absolute bottom-0.5 left-2 font-['Liberation_Sans',sans-serif] text-[26px] leading-8 font-bold text-white">0.000 (23+0)</p>
            </div>
          </div>
        </div>
        <div className="border-l-2 border-[#858585] pt-3">
          <AnglePanel />
        </div>
        <div className="-ml-2 bg-[#f8f8f8]">
          <Ruler />
        </div>
      </div>
      <VerticalSplitter />
      <div className="flex flex-col">
        <PropertyGrid />
        <HorizontalSplitter />
        <MarkerList />
        <HorizontalSplitter down />
        <div className="flex-1 border-2 border-b-0 border-[#b4b4b4] bg-white" />
      </div>
    </section>
  );
}

export default function App() {
  return (
    <main className="grid min-h-screen grid-cols-[1934fr_2054fr] content-start gap-x-[77px] bg-white pt-[21px] pr-[14px] pl-[17px] text-black">
      <PerspectiveView />
      <AnalysisView />
      <p className="pt-4 text-center font-['Liberation_Serif',serif] text-[80px] leading-[88px]">
        (<b>a</b>)
      </p>
      <p className="pt-4 text-center font-['Liberation_Serif',serif] text-[80px] leading-[88px]">
        (<b>b</b>)
      </p>
    </main>
  );
}
